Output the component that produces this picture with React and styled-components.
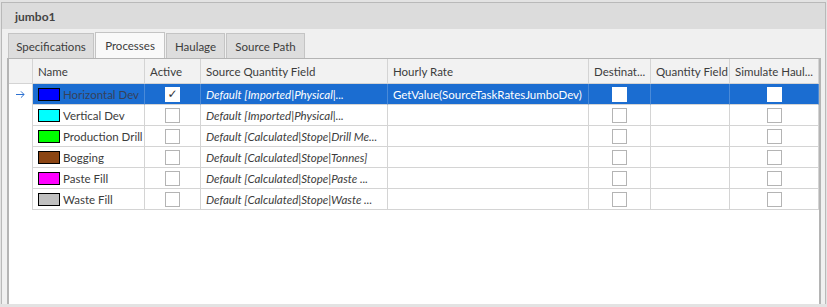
import React from 'react'
import styled, { createGlobalStyle } from 'styled-components'

const GlobalStyle = createGlobalStyle`
    html, body {
        margin: 0;
        padding: 0;
        background: #e3e3e3;
        font-family: Lato, "Liberation Sans", sans-serif;
    }
`

const columns = '24px 112px 56px 187px 201px 62px 79px 89px'

const rows = [
    { name: 'Horizontal Dev', color: '#0000ff', active: true, source: 'Default [Imported|Physical|...', rate: 'GetValue(SourceTaskRatesJumboDev)' },
    { name: 'Vertical Dev', color: '#00ffff', source: 'Default [Imported|Physical|...' },
    { name: 'Production Drill', color: '#00ff00', source: 'Default [Calculated|Stope|Drill Me...' },
    { name: 'Bogging', color: '#8b4513', source: 'Default [Calculated|Stope|Tonnes]' },
    { name: 'Paste Fill', color: '#ff00ff', source: 'Default [Calculated|Stope|Paste ...' },
    { name: 'Waste Fill', color: '#c0c0c0', source: 'Default [Calculated|Stope|Waste ...' },
]

const tabs = [
    { label: 'Specifications', width: 86 },
    { label: 'Processes', width: 70 },
    { label: 'Haulage', width: 59 },
    { label: 'Source Path', width: 79 },
]

export default function App() {
    return (
        <Page>
            <GlobalStyle />
            <Frame>
                <TitleBar>jumbo1</TitleBar>
                <Content>
                    <TabStrip>
                        {tabs.map(t => (
                            <Tab key={t.label} w={t.width} active={t.label === 'Processes'}>{t.label}</Tab>
                        ))}
                    </TabStrip>
                    <Panel>
                        <HeaderRow>
                            <HeadCell />
                            <HeadCell>Name</HeadCell>
                            <HeadCell>Active</HeadCell>
                            <HeadCell>Source Quantity Field</HeadCell>
                            <HeadCell>Hourly Rate</HeadCell>
                            <HeadCell>Destinat...</HeadCell>
                            <HeadCell>Quantity Field</HeadCell>
                            <HeadCell>Simulate Haul...</HeadCell>
                        </HeaderRow>
                        {rows.map((r, i) => {
                            const sel = i === 0
                            return (
                                <Row key={r.name}>
                                    <Indicator>{sel && <Arrow viewBox="0 0 12 10"><path d="M1 5h9M6.5 1.5 10 5 6.5 8.5" /></Arrow>}</Indicator>
                                    <Cell selected={sel} dim={sel}>
                                        <Swatch style={{ background: r.color }} />
                                        {r.name}
                                    </Cell>
                                    <Cell selected={sel} center>
                                        <Check selected={sel}>{r.active && '✓'}</Check>
                                    </Cell>
                                    <Cell selected={sel} italic>{r.source}</Cell>
                                    <Cell selected={sel}>{r.rate}</Cell>
                                    <Cell selected={sel} center><Check selected={sel} /></Cell>
                                    <Cell selected={sel} />
                                    <Cell selected={sel} center><Check selected={sel} /></Cell>
                                </Row>
                            )
                        })}
                    </Panel>
                </Content>
            </Frame>
        </Page>
    )
}

const Page = styled.div`
    width: 827px;
    height: 307px;
    padding-top: 2px;
    box-sizing: border-box;
    background: #e3e3e3;
    overflow: hidden;
`

const Frame = styled.div`
    margin-left: 1px;
    width: 825px;
    height: 302px;
    box-sizing: border-box;
    border: 1px solid #b9b9b9;
    border-bottom: none;
    display: flex;
    flex-direction: column;
    background: #f0f0f0;
`

const TitleBar = styled.div`
    height: 26px;
    background: #dcdcdc;
    padding-left: 13px;
    font-weight: bold;
    font-size: 12px;
    color: #444;
    display: flex;
    align-items: center;
`

const Content = styled.div`
    flex: 1;
    display: flex;
    flex-direction: column;
    padding: 3px 5px 0 5px;
`

const TabStrip = styled.div`
    display: flex;
    align-items: flex-end;
    height: 26px;
    padding-left: 1px;
`

const Tab = styled.div`
    width: ${p => p.w}px;
    height: ${p => p.active ? '26px' : '25px'};
    box-sizing: border-box;
    margin-right: 1px;
    border: 1px solid #c4c4c4;
    border-bottom: none;
    background: ${p => p.active ? '#f9f9f9' : '#dddddd'};
    color: #3c3c3c;
    font-size: 11.5px;
    display: flex;
    align-items: center;
    justify-content: center;
`

const Panel = styled.div`
    flex: 1;
    background: #fff;
    border: 2px solid #b4b4b4;
    border-top-width: 1px;
    border-bottom: none;
    width: 814px;
    box-sizing: border-box;
`

const HeaderRow = styled.div`
    display: grid;
    grid-template-columns: ${columns};
    height: 25px;
    background: #f2f2f2;
`

const HeadCell = styled.div`
    border-right: 1px solid #d4d4d4;
    border-bottom: 1px solid #d4d4d4;
    font-size: 11.5px;
    color: #3c3c3c;
    padding-left: 5px;
    display: flex;
    align-items: center;
    white-space: nowrap;
    overflow: hidden;
`

const Row = styled.div`
    display: grid;
    grid-template-columns: ${columns};
    height: 21px;
`

const Indicator = styled.div`
    background: #fff;
    display: flex;
    align-items: center;
    justify-content: center;
    border-right: 1px solid #d4d4d4;
`

const Arrow = styled.svg`
    width: 11px;
    height: 9px;
    fill: none;
    stroke: #2a6fd0;
    stroke-width: 1.1;
`

const Cell = styled.div`
    background: ${p => p.selected ? '#1b6dd1' : '#fff'};
    color: ${p => p.dim ? '#37415a' : p.selected ? '#fff' : '#3c3c3c'};
    border-right: 1px solid ${p => p.selected ? '#4a8ad8' : '#d4d4d4'};
    border-bottom: 1px solid #d4d4d4;
    font-size: 11.5px;
    font-style: ${p => p.italic ? 'italic' : 'normal'};
    padding-left: ${p => p.center ? '0' : '5px'};
    display: flex;
    align-items: center;
    justify-content: ${p => p.center ? 'center' : 'flex-start'};
    white-space: nowrap;
    overflow: hidden;
`

const Swatch = styled.span`
    width: 20px;
    height: 11px;
    border: 1px solid #000;
    margin-right: 3px;
    flex-shrink: 0;
`

const Check = styled.span`
    width: 13px;
    height: 13px;
    border: 1px solid ${p => p.selected ? '#fff' : '#b4b4b4'};
    background: #fff;
    color: #333;
    font-size: 12px;
    line-height: 13px;
    text-align: center;
    font-family: "DejaVu Sans", sans-serif;
`
